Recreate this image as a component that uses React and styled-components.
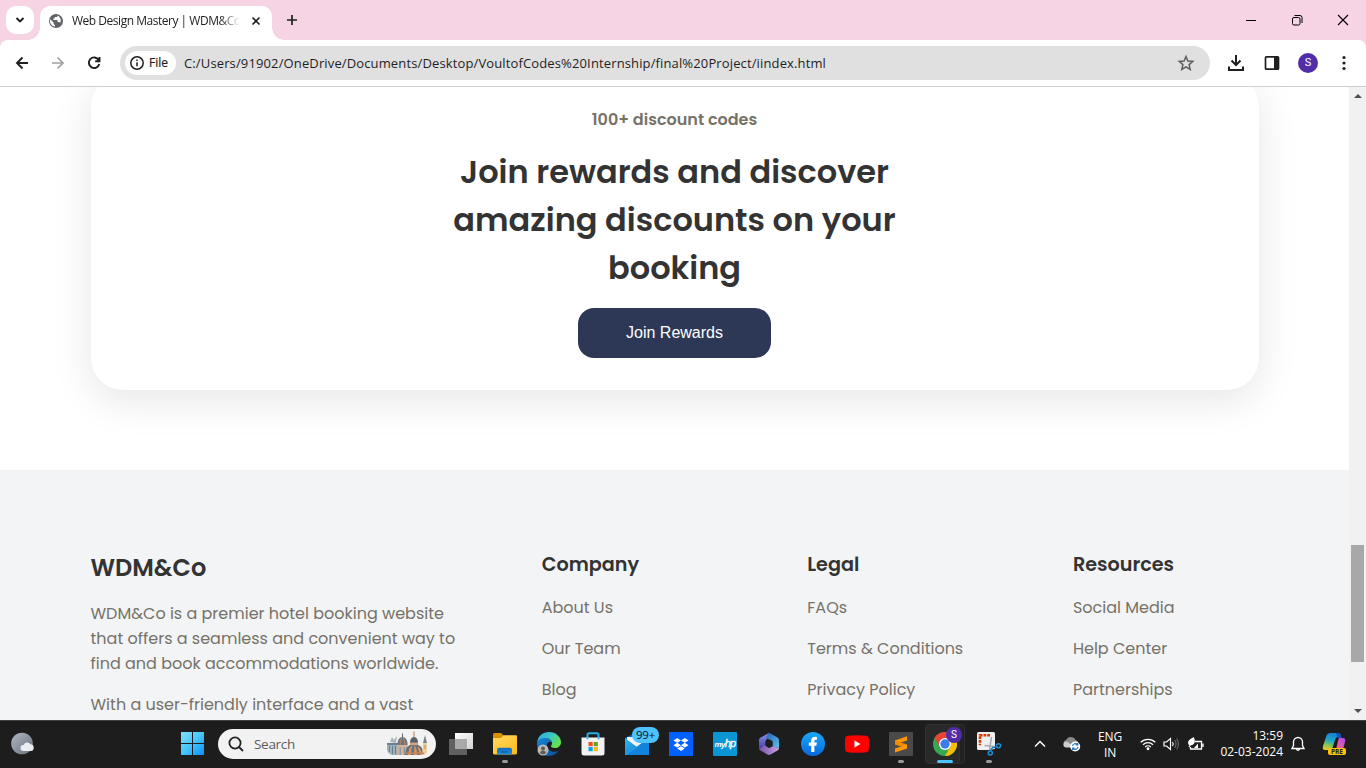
import React from "react";
import styled, { createGlobalStyle } from "styled-components";

const GlobalStyle = createGlobalStyle`
  *, *::before, *::after { box-sizing: border-box; }
  body { margin: 0; background: #fff; overflow: hidden; }
  h2, h3, h4, p, ul { margin: 0; padding: 0; }
  svg { display: block; flex: none; }
`;

const poppins = `"Poppins", "Inter", sans-serif`;
const segoe = `"Segoe UI", "Open Sans", sans-serif`;

const Screen = styled.div`
  width: 1366px;
  height: 768px;
  display: flex;
  flex-direction: column;
  overflow: hidden;
  font-family: ${segoe};
`;

/* ---------- Browser chrome ---------- */

const TabStrip = styled.header`
  height: 40px;
  flex: none;
  display: flex;
  align-items: flex-start;
  padding: 6px 0 0 6px;
  background: #f6d4e3;
`;

const TabSearch = styled.button`
  width: 28px;
  height: 28px;
  border: 0;
  padding: 0;
  border-radius: 10px;
  background: #fff;
  display: grid;
  place-items: center;
`;

const Tab = styled.div`
  position: relative;
  width: 232px;
  height: 34px;
  margin-left: 6px;
  padding: 0 10px 5px 9px;
  display: flex;
  align-items: center;
  border-radius: 10px 10px 0 0;
  background: #fff;
  &::before, &::after {
    content: "";
    position: absolute;
    bottom: 0;
    width: 12px;
    height: 12px;
  }
  &::before { left: -12px; background: radial-gradient(circle at 0 0, transparent 11.5px, #fff 12px); }
  &::after { right: -12px; background: radial-gradient(circle at 100% 0, transparent 11.5px, #fff 12px); }
`;

const TabTitle = styled.span`
  width: 167px;
  margin-left: 9px;
  overflow: hidden;
  white-space: nowrap;
  font-size: 12px;
  letter-spacing: -0.48px;
  color: #1f1f1f;
  -webkit-mask-image: linear-gradient(90deg, #000 148px, transparent 168px);
  mask-image: linear-gradient(90deg, #000 148px, transparent 168px);
`;

const TabClose = styled.span`margin-left: 12px;`;
const NewTab = styled.span`margin: 7px 0 0 13px;`;

const WindowControls = styled.div`
  margin-left: auto;
  display: flex;
  gap: 32px;
  padding: 7px 16px 0 0;
`;

const ToolbarBack = styled.div`
  flex: none;
  background: #f6d4e3;
`;

const Toolbar = styled.nav`
  height: 47px;
  display: flex;
  align-items: center;
  padding: 0 12px 1px 13px;
  background: #fff;
  border-radius: 8px 8px 0 0;
  border-bottom: 1px solid #cfcfcf;
`;

const NavButtons = styled.div`
  display: flex;
  gap: 18px;
  margin-right: 17px;
`;

const Omnibox = styled.div`
  width: 1090px;
  height: 34px;
  flex: none;
  display: flex;
  align-items: center;
  padding: 0 15px 0 5px;
  border-radius: 17px;
  background: #e0e0e0;
`;

const FileChip = styled.span`
  width: 51px;
  height: 24px;
  display: flex;
  align-items: center;
  gap: 4px;
  padding-left: 4px;
  border-radius: 12px;
  background: #fff;
  font-size: 12px;
  color: #1f1f1f;
  -webkit-text-stroke: 0.2px #1f1f1f;
`;

const Url = styled.span`
  flex: 1;
  margin-left: 8px;
  white-space: nowrap;
  font-size: 13px;
  letter-spacing: 0.133px;
  color: #1f1f1f;
`;

const ToolbarActions = styled.div`
  display: flex;
  align-items: center;
  gap: 16px;
  margin-left: 16px;
`;

const Avatar = styled.span`
  width: 20px;
  height: 20px;
  border-radius: 50%;
  background: #512da8;
  color: #fff;
  font: 11px/20px Roboto, sans-serif;
  text-align: center;
`;

/* ---------- Page ---------- */

const Viewport = styled.div`
  height: 633px;
  flex: none;
  display: flex;
  overflow: hidden;
`;

const Page = styled.main`
  width: 1349px;
  height: 633px;
  overflow: hidden;
  background: #fff;
  font-family: ${poppins};
  color: #333;
`;

const RewardSection = styled.section`
  height: 383px;
  overflow: hidden;
  padding: 0 90.5px;
`;

const RewardCard = styled.div`
  height: 315px;
  margin-top: -12px;
  padding: 32px 0;
  display: flex;
  flex-direction: column;
  align-items: center;
  border-radius: 32px;
  background: #fff;
  box-shadow: 0 10px 40px rgba(0, 0, 0, 0.1);
`;

const Kicker = styled.p`
  font-size: 16px;
  font-weight: 600;
  line-height: 25px;
  color: #767268;
`;

const RewardTitle = styled.h2`
  width: 500px;
  margin: 16px 0;
  font-size: 32px;
  font-weight: 600;
  line-height: 48px;
  text-align: center;
`;

const JoinButton = styled.button`
  width: 193px;
  height: 50px;
  border: 0;
  border-radius: 16px;
  background: #2c3855;
  color: #fff;
  font: 16px "Liberation Sans", Arial, sans-serif;
`;

const Footer = styled.footer`
  height: 250px;
  overflow: hidden;
  padding: 80px 90.5px 0;
  display: grid;
  grid-template-columns: 2fr 1fr 1fr 1fr;
  gap: 80px;
  background: #f3f4f6;
`;

const FooterColumn = styled.div`min-width: 0;`;

const Brand = styled.h3`
  margin-bottom: 15px;
  font-size: 24px;
  font-weight: 600;
  line-height: 36px;
`;

const Paragraph = styled.p`
  margin-bottom: 16px;
  font-size: 16px;
  line-height: 25px;
  color: #767268;
`;

const ColumnTitle = styled.h4`
  margin-bottom: 16px;
  font-size: 19.2px;
  font-weight: 600;
  line-height: 29px;
`;

const LinkItem = styled.p`
  margin-bottom: 16px;
  font-size: 16px;
  line-height: 25px;
  white-space: nowrap;
  color: #767268;
`;

const Scrollbar = styled.div`
  width: 17px;
  height: 633px;
  display: flex;
  flex-direction: column;
  align-items: center;
  background: #f1f1f1;
`;

const ScrollArrow = styled.span`
  height: 17px;
  display: grid;
  place-items: center;
`;

const ScrollThumb = styled.span`
  width: 13px;
  height: 117px;
  margin: 441px 0 40px;
  background: #a8a8a8;
`;

/* ---------- Taskbar ---------- */

const Taskbar = styled.footer`
  height: 48px;
  flex: none;
  display: flex;
  align-items: center;
  padding-bottom: 2px;
  border-top: 1px solid #3e4042;
  background: #1d1d1d;
  color: #fff;
`;

const Weather = styled.div`
  width: 181px;
  padding-left: 11px;
`;

const SearchBox = styled.div`
  width: 218px;
  height: 30px;
  margin-left: 14px;
  padding: 0 8px 0 10px;
  display: flex;
  align-items: center;
  border-radius: 15px;
  background: #f2f2f2;
`;

const SearchLabel = styled.span`
  flex: 1;
  margin-left: 10px;
  font-size: 13.5px;
  letter-spacing: -0.3px;
  color: #5c5c5c;
`;

const Apps = styled.div`
  display: flex;
  margin-left: 3px;
`;

const AppSlot = styled.div`
  position: relative;
  width: 44px;
  height: 45px;
  display: grid;
  place-items: center;
  &::after {
    content: "";
    position: absolute;
    display: ${(p) => (p.$state ? "block" : "none")};
    bottom: 3px;
    left: ${(p) => (p.$state === "active" ? 14 : 19)}px;
    width: ${(p) => (p.$state === "active" ? 16 : 6)}px;
    height: 3px;
    border-radius: 2px;
    background: ${(p) => (p.$state === "active" ? "#4cc2ff" : "#9a9a9a")};
  }
`;

const ActiveTile = styled.span`
  position: absolute;
  left: ${(p) => p.$left}px;
  top: 3px;
  width: 35px;
  height: 40px;
  border: 1px solid #303030;
  border-radius: 4px;
  background: ${(p) => p.$fill};
`;

const AppIcon = styled.span`position: relative;`;

const MailBadge = styled.span`
  position: absolute;
  left: 17px;
  top: 6px;
  width: 27px;
  height: 16px;
  border-radius: 8px;
  background: #4cc2ff;
  color: #111;
  font-size: 11.5px;
  line-height: 16px;
  text-align: center;
  letter-spacing: -0.3px;
`;

const ProfileBadge = styled.span`
  position: absolute;
  left: 23px;
  top: 6px;
  width: 16px;
  height: 16px;
  border-radius: 50%;
  background: #512da8;
  font: 10px/16px Roboto, sans-serif;
  text-align: center;
`;

const HpTile = styled.span`
  display: block;
  width: 24px;
  height: 24px;
  border-radius: 1px;
  background: #0a95d5;
  font: italic 700 8px/23px "Liberation Sans", sans-serif;
  letter-spacing: -0.7px;
  text-align: center;
  b { font-size: 11px; font-weight: 400; -webkit-text-stroke: 0.3px #fff; }
`;

const Tray = styled.div`
  flex: 1;
  display: flex;
  align-items: center;
  font-size: 12px;
`;

const TrayIcon = styled.span`margin-left: ${(p) => p.$gap}px;`;

const Language = styled.div`
  width: 28px;
  margin-left: 15px;
  padding-top: 2px;
  line-height: 16px;
  text-align: center;
  letter-spacing: -0.15px;
`;

const Clock = styled.div`
  width: 70px;
  margin-left: 8px;
  padding-top: 1px;
  line-height: 16px;
  text-align: right;
`;

const Copilot = styled.span`
  position: relative;
  margin-left: 17px;
`;

const PreLabel = styled.span`
  position: absolute;
  left: 6px;
  top: 16px;
  width: 18px;
  height: 7px;
  border-radius: 2px;
  background: #fcc00e;
  color: #222;
  font: 700 6.5px/7.5px "Open Sans", sans-serif;
  text-align: center;
`;

/* ---------- Icons ---------- */

const Stroke = ({ w = 18, h = w, box, color = "#1f1f1f", sw = 1.8, children, ...rest }) => (
  <svg width={w} height={h} viewBox={box || `0 0 ${w} ${h}`} fill="none" stroke={color} strokeWidth={sw} {...rest}>
    {children}
  </svg>
);

const Globe = () => (
  <svg width="14" height="14" viewBox="0 0 14 14">
    <circle cx="7" cy="7" r="7" fill="#5f6368" />
    <path d="M1.2 5.2 4.6 8.6V10l1.3 1v1.7A5.8 5.8 0 0 1 1.2 5.2zM8.6 1.4c0 1-.5 1.6-1.4 1.7H5.7v1.5H4.3V6h4.2v2h1.4c.6 0 1.1.3 1.3.9A5.7 5.7 0 0 0 8.6 1.4z" fill="#fff" />
  </svg>
);

const StartLogo = () => (
  <svg width="23" height="23" viewBox="0 0 23 23">
    <defs>
      <linearGradient id="start" x1="0" y1="0" x2="23" y2="23" gradientUnits="userSpaceOnUse">
        <stop stopColor="#82e0ff" /><stop offset=".5" stopColor="#45c5fb" /><stop offset="1" stopColor="#0a91fb" />
      </linearGradient>
    </defs>
    <path d="M0 0h11v11H0zM12 0h11v11H12zM0 12h11v11H0zM12 12h11v11H12z" fill="url(#start)" />
  </svg>
);

const WeatherIcon = () => (
  <svg width="24" height="23" viewBox="0 0 24 23">
    <defs>
      <linearGradient id="moon" x1="0" y1="0" x2="1" y2="1">
        <stop stopColor="#b0b9c3" /><stop offset="1" stopColor="#68717b" />
      </linearGradient>
    </defs>
    <circle cx="11" cy="11.500" r="10.800" fill="url(#moon)" />
    <path d="M12.500 19a3 3 0 0 1 0-6 4 4 0 0 1 7-.7 3.400 3.400 0 0 1 .6 6.700z" fill="#e9edf0" />
  </svg>
);

const Skyline = () => (
  <svg width="42" height="25" viewBox="0 0 42 25">
    <path d="M1 14h11v10H6q-4-1-5-5z" fill="#9fb0b9" />
    <path d="M1 12h11v2H1zM3 15h1v6H3zm3 0h1v8H6zm3 0h1v8H9z" fill="#6b7f8e" />
    <path d="m4 11 2-5 2 3 3-4-1 7z" fill="#a9b6bd" />
    <path d="M11.500 13h10v11h-10z" fill="#d6b39b" />
    <path d="M11.500 14q0-8 5-8t5 8z" fill="#6a757f" />
    <path d="M16 2.500h1V7h-1z" fill="#5a6670" />
    <path d="M14 14q0-5 2-7.500M19 14q0-5-2-7.500" stroke="#cf8a5e" strokeWidth=".8" fill="none" />
    <path d="M13.500 16H15v8h-1.500zm4 0H19v8h-1.500z" fill="#8c98a0" />
    <path d="M19 24q0-11 9-11t10 11z" fill="#69737c" />
    <path d="M22 24q1-8 4.500-10-1.500 4-1.500 10zm6.500-10q2.500 3 2.500 10h-3zm3 1q4 3 4.500 9h-2z" fill="#dd9461" />
    <path d="M24 12.500Q24 6 28 6t4 6.500z" fill="#56616b" />
    <path d="M24 11.500h8V14h-8z" fill="#d3a27f" /><path d="M27.500.5h1V6h-1z" fill="#b9754f" />
    <path d="M37 12h4v10l-3 2h-2z" fill="#ead0a0" />
    <path d="m37 12 2-8 2 8z" fill="#75828b" />
    <path d="M38.500 14h1v4h-1zM20 21.500h18V23H20z" fill="#c58358" />
  </svg>
);

const TaskView = () => (
  <svg width="24" height="24" viewBox="0 0 24 24">
    <defs><linearGradient id="tv" x1="0" y1="0" x2="1" y2="1"><stop stopColor="#fff" /><stop offset="1" stopColor="#d3d3d3" /></linearGradient></defs>
    <path d="M6 1h18v16H6z" fill="url(#tv)" />
    <path d="M0 7h18v16H0z" fill="#606060" />
    <path d="M6 7h12v10H6z" fill="#a9a9a9" />
  </svg>
);

const Folder = () => (
  <svg width="24" height="24" viewBox="0 0 24 24">
    <defs>
      <linearGradient id="fo" x1="0" y1="0" x2="1" y2="1"><stop stopColor="#ffdb68" /><stop offset="1" stopColor="#fdb913" /></linearGradient>
      <linearGradient id="fb" x1="0" y1="0" x2="0" y2="1"><stop stopColor="#0f6cbd" /><stop offset="1" stopColor="#258fe0" /></linearGradient>
    </defs>
    <path d="M0 2.500Q0 1 1.500 1H8l2.500 2.500L8 8H0z" fill="#d69005" />
    <path d="M0 6h8l2.500-2.800H23q1 0 1 1V21q0 1.500-1.500 1.500h-21Q0 22.500 0 21z" fill="url(#fo)" />
    <path d="M4 22.500V18q0-2.300 2.300-2.300h10.400Q19 15.700 19 18v4.500z" fill="url(#fb)" />
    <path d="M8 19.500h7v1H8z" fill="#0a5392" />
  </svg>
);

const Edge = () => (
  <svg width="24" height="24" viewBox="0 0 24 24">
    <defs>
      <linearGradient id="e1" x1="0" y1="0" x2="1" y2=".6"><stop stopColor="#2baae8" /><stop offset=".5" stopColor="#38c6c9" /><stop offset="1" stopColor="#68e14a" /></linearGradient>
      <linearGradient id="e2" x1="0" y1="0" x2="1" y2="1"><stop stopColor="#1b86d6" /><stop offset="1" stopColor="#0b4b99" /></linearGradient>
    </defs>
    <path d="M0 11Q2 4 9 5.500q5 1 6 5-4-2-5 2-1 5 5 7 4 1 7-1-4 5.500-11 5.500Q0 23 0 11z" fill="url(#e2)" />
    <path d="M0 10.500C1 4 6 0 12 0c7 0 12 5 12 10 0 4-3 6-6 6-3 0-4-1-4-2 0-.8 1-1 1-3 0-3-3-5-7-5-4 0-7 2-8 4.500z" fill="url(#e1)" />
    <circle cx="6" cy="18" r="5.500" fill="#bbb8b5" />
    <circle cx="6" cy="16.500" r="2" fill="#5d5b59" />
    <path d="M2.800 21q.4-2.500 3.200-2.500T9.200 21Q6 23.600 2.800 21z" fill="#5d5b59" />
  </svg>
);

const Store = () => (
  <svg width="24" height="24" viewBox="0 0 24 24">
    <path d="M6.500 6V3q0-1.800 1.800-1.800h7.400q1.800 0 1.800 1.800v3" fill="none" stroke="#28aee8" strokeWidth="2" />
    <path d="M.5 5.500h23V21q0 2.500-2.500 2.500H3Q.5 23.500.5 21z" fill="#f2f2f2" />
    <path d="M6.500 5.500v1.800M17.500 5.500v1.800" stroke="#28aee8" strokeWidth="2" />
    <path d="M7.500 10h4.200v4.200H7.500z" fill="#f25022" /><path d="M12.700 10h4.200v4.200h-4.200z" fill="#68a51c" />
    <path d="M7.500 15h4.200v4.200H7.500z" fill="#00a4ef" /><path d="M12.700 15h4.200v4.200h-4.200z" fill="#ffb900" />
  </svg>
);

const Mail = () => (
  <svg width="24" height="24" viewBox="0 0 24 24">
    <defs><linearGradient id="ma" x1="0" y1="0" x2="1" y2="1"><stop stopColor="#35b7ee" /><stop offset="1" stopColor="#0a6ed0" /></linearGradient></defs>
    <path d="M0 6 12 0l12 6v17H0z" fill="#0d66b7" />
    <path d="M2 5h20v8l-10 4L2 9z" fill="#f2f4f8" />
    <path d="M0 6v17h24V6L12 15z" fill="url(#ma)" />
    <path d="M24 6 0 23h24z" fill="#1183dc" />
    <path d="m0 23 12-8 3-2.500" fill="none" stroke="#49b5ee" strokeWidth=".6" />
  </svg>
);

const Dropbox = () => (
  <svg width="24" height="24" viewBox="0 0 24 24">
    <path d="M0 0h24v24H0z" fill="#0061fe" />
    <path d="m8.200 6 3.800 2.400-3.800 2.400-3.800-2.400zM15.800 6l3.800 2.400-3.800 2.400L12 8.400zM8.200 10.800l3.800 2.400-3.800 2.400-3.800-2.400zM15.800 10.800l3.800 2.400-3.800 2.400-3.800-2.400zM12 14.200l3.800 2.300-3.800 2.400-3.800-2.400z" fill="#fff" />
  </svg>
);

const M365 = () => (
  <svg width="24" height="24" viewBox="0 0 24 24">
    <defs>
      <linearGradient id="o1" x1="0" y1="0" x2="0" y2="1"><stop stopColor="#8f8fe6" /><stop offset="1" stopColor="#3e43b0" /></linearGradient>
      <linearGradient id="o2" x1="0" y1="0" x2="1" y2="1"><stop stopColor="#275eb5" /><stop offset="1" stopColor="#5bc3ee" /></linearGradient>
      <linearGradient id="o3" x1="0" y1="0" x2="1" y2="0"><stop stopColor="#7553aa" /><stop offset="1" stopColor="#c9a0e3" /></linearGradient>
    </defs>
    <path d="M12 1 3.500 5.500Q2 6.500 2 8v8.500L8.500 13V9l5-7z" fill="url(#o1)" />
    <path d="M11 1.200q1-.5 2.500.2l7 4Q22 6.400 22 8v8l-6.500-1.500V9L9 6z" fill="url(#o2)" />
    <path d="m2 16.500 6.500-3.700 3.500 3 3.500-1.600L22 16q0 1.500-1.500 2.500L13.500 22.500q-1.500.8-3 0L3.500 18.500Q2 17.700 2 16.500z" fill="url(#o3)" />
    <path d="m12 8 3.500 2v4L12 16l-3.500-2v-4z" fill="#1d1d1d" />
  </svg>
);

const Facebook = () => (
  <svg width="24" height="24" viewBox="0 0 24 24">
    <defs><linearGradient id="fbk" x1="0" y1="0" x2="0" y2="1"><stop stopColor="#19a8f8" /><stop offset="1" stopColor="#0867df" /></linearGradient></defs>
    <circle cx="12" cy="12" r="12" fill="url(#fbk)" />
    <path d="M10.200 20v-6.200H7.800v-3.200h2.400V8.800q0-4 3.800-4 1 0 2 .2v2.700h-1.200q-1.400 0-1.400 1.400v1.500h2.500l-.5 3.200h-2V20z" fill="#fff" />
  </svg>
);

const YouTube = () => (
  <svg width="24" height="24" viewBox="0 0 24 24">
    <path d="M2.500 3.800q9.500-1 19 0 2 .3 2.300 2.500.5 5.700 0 11.400-.3 2.200-2.300 2.500-9.500 1-19 0-2-.3-2.300-2.500-.5-5.700 0-11.400.3-2.200 2.300-2.500z" fill="#f00" />
    <path d="m9.500 8.500 6 3.500-6 3.500z" fill="#fff" />
  </svg>
);

const Sublime = () => (
  <svg width="24" height="24" viewBox="0 0 24 24">
    <path d="M1 0h22q1 0 1 1v22q0 1-1 1H1q-1 0-1-1V1q0-1 1-1z" fill="#4a4a4a" />
    <path d="m6 8.500 12-4.300v4.300L6 12.600z" fill="#ff9800" />
    <path d="M6 8.500v4l12 4v-4z" fill="#f08c00" />
    <path d="m6 16.400 12-4v4.200L6 20.500z" fill="#ff9800" />
  </svg>
);

const Chrome = () => (
  <svg width="24" height="24" viewBox="0 0 24 24">
    <circle cx="12" cy="12" r="12" fill="#34a853" />
    <path d="M12 6H22.400A12 12 0 0 1 12 24L17.200 15z" fill="#fbbc04" />
    <path d="M6.800 15 1.600 6A12 12 0 0 1 22.400 6H12z" fill="#ea4335" />
    <circle cx="12" cy="12" r="6" fill="#fff" />
    <circle cx="12" cy="12" r="4.700" fill="#3b7ded" />
  </svg>
);

const Snip = () => (
  <svg width="26" height="26" viewBox="0 0 26 26">
    <path d="M2.500 1h15Q19 1 19 2.500V18l-6 1H2.500Q1 19 1 17.500v-15Q1 1 2.500 1z" fill="#f0f0f0" />
    <path d="M14 4.200H4v10" fill="none" stroke="#d83b01" strokeWidth="2.600" strokeDasharray="2.800 .9" />
    <path d="m8.500 14.500 10.500 1M15.500 6l-2 13" stroke="#a5a9ae" strokeWidth="1.600" />
    <circle cx="22.500" cy="14.700" r="2" fill="none" stroke="#1891d8" strokeWidth="1.600" />
    <circle cx="14.300" cy="22" r="2" fill="none" stroke="#1891d8" strokeWidth="1.600" />
    <path d="m21 15.500-5 1.500M15 20.500l.7-3.500" stroke="#137ac0" strokeWidth="1.500" />
  </svg>
);

const OneDrive = () => (
  <svg width="18" height="16" viewBox="0 0 18 16">
    <path d="M4 11a3.500 3.500 0 0 1-.8-6.900A5 5 0 0 1 12.500 4 4 4 0 0 1 14 11z" fill="#8a8a8a" />
    <path d="M3 11.500a3 3 0 0 1 1-6l8 6z" fill="#cfcfcf" />
    <circle cx="12.200" cy="10.500" r="5" fill="#fff" />
    <path d="M9.500 10a2.800 2.800 0 0 1 5-1.200M15 11a2.800 2.800 0 0 1-5 1.300M14.700 7v2h-2M9.700 14v-2h2" fill="none" stroke="#1473c8" strokeWidth="1.200" />
  </svg>
);

const CopilotLogo = () => (
  <svg width="24" height="24" viewBox="0 0 24 24">
    <defs>
      <linearGradient id="c1" x1=".3" y1="0" x2="0" y2="1"><stop stopColor="#1683d8" /><stop offset=".4" stopColor="#27a9c2" /><stop offset=".7" stopColor="#93c849" /><stop offset="1" stopColor="#f7cd1c" /></linearGradient>
      <linearGradient id="c2" x1="1" y1="0" x2="0" y2="1"><stop stopColor="#a34bf0" /><stop offset=".5" stopColor="#ef5aa0" /><stop offset="1" stopColor="#ff9663" /></linearGradient>
    </defs>
    <path d="M8 1h8q2 0 2.700 2L19 5h-3q-2 0-2.600 2l-3 9q-.6 2-2.400 2H3q-3 0-2-4L4.500 3.500Q5.400 1 8 1z" fill="url(#c1)" />
    <path d="M14 1h2q2 0 2.700 2L20 7l-4-1z" fill="#164fc2" />
    <path d="M17 6h4q3 0 2 4l-2.500 9q-1 3-4 3H10q3-1 4-4l2-9q.5-2 1-3z" fill="url(#c2)" />
  </svg>
);

/* ---------- Content ---------- */

const columns = [
  { title: "Company", links: ["About Us", "Our Team", "Blog"] },
  { title: "Legal", links: ["FAQs", "Terms & Conditions", "Privacy Policy"] },
  { title: "Resources", links: ["Social Media", "Help Center", "Partnerships"] },
];

const apps = [
  { icon: <TaskView /> },
  { icon: <Folder />, state: "open" },
  { icon: <Edge /> },
  { icon: <Store /> },
  { icon: <Mail />, badge: <MailBadge>99+</MailBadge> },
  { icon: <Dropbox /> },
  { icon: <HpTile>my<b>hp</b></HpTile> },
  { icon: <M365 /> },
  { icon: <Facebook /> },
  { icon: <YouTube /> },
  { icon: <Sublime />, state: "open" },
  {
    icon: <Chrome />,
    state: "active",
    tile: <><ActiveTile $left={7} $fill="#222" /><ActiveTile $left={2} $fill="#292929" /></>,
    badge: <ProfileBadge>S</ProfileBadge>,
  },
  { icon: <Snip />, state: "open" },
];

export default function App() {
  return (
    <Screen>
      <GlobalStyle />
      <TabStrip>
        <TabSearch>
          <Stroke w={10} sw={1.900}><path d="m1.500 3 3.500 3.500L8.500 3" /></Stroke>
        </TabSearch>
        <Tab>
          <Globe />
          <TabTitle>Web Design Mastery | WDM&amp;Co</TabTitle>
          <TabClose><Stroke w={10} sw={1.600}><path d="m1.500 1.500 7 7m0-7-7 7" /></Stroke></TabClose>
        </Tab>
        <NewTab><Stroke w={14} sw={1.700}><path d="M7 2v10M2 7h10" /></Stroke></NewTab>
        <WindowControls>
          <Stroke w={14} sw={1} color="#000"><path d="M2 7.500h10" /></Stroke>
          <Stroke w={14} sw={1} color="#000">
            <rect x="2.500" y="4.500" width="7.500" height="7.500" rx="1.500" />
            <path d="M4.500 2.500h5.500q2 0 2 2v5.500" />
          </Stroke>
          <Stroke w={14} sw={1.100} color="#000"><path d="m2 2 10 10m0-10L2 12" /></Stroke>
        </WindowControls>
      </TabStrip>
      <ToolbarBack>
        <Toolbar>
          <NavButtons>
            <Stroke sw={1.900}><path d="M15 9H4m5.500-5.500L4 9l5.500 5.500" /></Stroke>
            <Stroke sw={1.700} color="#a0a0a0"><path d="M3 9h11M8.500 3.500 14 9l-5.500 5.500" /></Stroke>
            <Stroke sw={1.900}><path d="M13.700 6A5.300 5.300 0 1 0 14.300 10M14.500 3v4.300h-4.300" /></Stroke>
          </NavButtons>
          <Omnibox>
            <FileChip>
              <Stroke w={16} sw={1.500}>
                <circle cx="8" cy="8" r="6.200" /><path d="M8 7.300v4M8 4.500v1.500" />
              </Stroke>
              File
            </FileChip>
            <Url>C:/Users/91902/OneDrive/Documents/Desktop/VoultofCodes%20Internship/final%20Project/iindex.html</Url>
            <Stroke sw={1.500} color="#5f5f5f">
              <path d="m9 2.500 1.900 4.500 4.900.4-3.700 3.200 1.100 4.800L9 12.800l-4.200 2.600 1.100-4.800-3.700-3.200 4.900-.4z" />
            </Stroke>
          </Omnibox>
          <ToolbarActions>
            <Stroke w={20} sw={2}><path d="M10 2v10M5.500 7.500 10 12l4.500-4.500M3 13.500V17h14v-3.500" /></Stroke>
            <Stroke w={20} sw={1.700}>
              <rect x="3.500" y="3.800" width="13" height="12.400" rx=".8" />
              <path d="M12 4h4.500v12H12z" fill="#1f1f1f" stroke="none" />
            </Stroke>
            <Avatar>S</Avatar>
            <svg width="20" height="20" viewBox="0 0 20 20" fill="#1f1f1f">
              <circle cx="10" cy="4.500" r="1.600" /><circle cx="10" cy="10" r="1.600" /><circle cx="10" cy="15.500" r="1.600" />
            </svg>
          </ToolbarActions>
        </Toolbar>
      </ToolbarBack>

      <Viewport>
        <Page>
          <RewardSection>
            <RewardCard>
              <Kicker>100+ discount codes</Kicker>
              <RewardTitle>Join rewards and discover amazing discounts on your booking</RewardTitle>
              <JoinButton>Join Rewards</JoinButton>
            </RewardCard>
          </RewardSection>
          <Footer>
            <FooterColumn>
              <Brand>WDM&amp;Co</Brand>
              <Paragraph>
                WDM&amp;Co is a premier hotel booking website that offers a seamless and convenient way to find and
                book accommodations worldwide.
              </Paragraph>
              <Paragraph>With a user-friendly interface and a vast</Paragraph>
            </FooterColumn>
            {columns.map((column) => (
              <FooterColumn key={column.title}>
                <ColumnTitle>{column.title}</ColumnTitle>
                {column.links.map((text) => <LinkItem key={text}>{text}</LinkItem>)}
              </FooterColumn>
            ))}
          </Footer>
        </Page>
        <Scrollbar>
          <ScrollArrow>
            <svg width="8" height="4" viewBox="0 0 8 4"><path d="M0 4 4 0l4 4z" fill="#505050" /></svg>
          </ScrollArrow>
          <ScrollThumb />
          <ScrollArrow>
            <svg width="8" height="4" viewBox="0 0 8 4"><path d="m0 0 4 4 4-4z" fill="#505050" /></svg>
          </ScrollArrow>
        </Scrollbar>
      </Viewport>

      <Taskbar>
        <Weather><WeatherIcon /></Weather>
        <StartLogo />
        <SearchBox>
          <Stroke w={16} sw={1.800} color="#222"><circle cx="7" cy="7" r="5.600" /><path d="m11 11 4 4" /></Stroke>
          <SearchLabel>Search</SearchLabel>
          <Skyline />
        </SearchBox>
        <Apps>
          {apps.map((app, index) => (
            <AppSlot key={index} $state={app.state}>
              {app.tile}
              <AppIcon>{app.icon}</AppIcon>
              {app.badge}
            </AppSlot>
          ))}
        </Apps>
        <Tray>
          <TrayIcon $gap={23}><Stroke w={12} h={12} sw={1.500} color="#fff"><path d="m1 8.500 5-5 5 5" /></Stroke></TrayIcon>
          <TrayIcon $gap={17}><OneDrive /></TrayIcon>
          <Language>ENG<br />IN</Language>
          <TrayIcon $gap={16}>
            <Stroke w={16} h={14} sw={1.300} color="#fff">
              <path d="M.7 5.300a10.500 10.500 0 0 1 14.600 0M3 7.700a7.200 7.200 0 0 1 10 0M5.200 10a4 4 0 0 1 5.600 0" />
              <circle cx="8" cy="11.800" r=".8" fill="#fff" />
            </Stroke>
          </TrayIcon>
          <TrayIcon $gap={7}>
            <Stroke w={18} h={14} sw={1.200} color="#fff">
              <path d="M1 5v4h2.500L7.500 12.500v-11L3.500 5zM9.500 5q1.500 2 0 4" />
              <path d="M11.500 3q3 4 0 8M13.500 1.500q4 5.500 0 11" stroke="#666" />
            </Stroke>
          </TrayIcon>
          <TrayIcon $gap={6}>
            <Stroke w={18} h={14} sw={1.300} color="#fff">
              <path d="M8 4.500h6.500v7.500H3.500V10M16 6.500v3.500" />
              <path d="M6.500 1q1.500 3.500-.3 5.500-1.500 1.700-3.800 1Q.8 5.500 3 3.300 4.500 2 6.500 1zM2 10l2.500-4" fill="#fff" />
              <path d="m7 11 4-4.500V11z" fill="#fff" stroke="none" />
            </Stroke>
          </TrayIcon>
          <Clock>13:59<br />02-03-2024</Clock>
          <TrayIcon $gap={8}>
            <Stroke w={14} h={16} sw={1.300} color="#fff">
              <path d="M2.500 9.500V6a4.500 4.500 0 0 1 9 0v3.500l1.500 3H1zM5.300 13q1.700 2.500 3.400 0" />
            </Stroke>
          </TrayIcon>
          <Copilot><CopilotLogo /><PreLabel>PRE</PreLabel></Copilot>
        </Tray>
      </Taskbar>
    </Screen>
  );
}
